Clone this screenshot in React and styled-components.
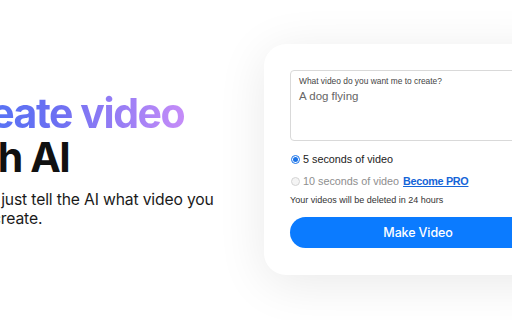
import styled, { createGlobalStyle } from 'styled-components';

const Global = createGlobalStyle`
  html, body {
    margin: 0;
    padding: 0;
    background: #fff;
    overflow: hidden;
  }
  body {
    font-family: Inter, "Noto Sans", sans-serif;
    color: #111;
  }
`;

const Page = styled.main`
  width: 512px;
  height: 320px;
  display: flex;
  align-items: flex-start;
  overflow: hidden;
`;

const Hero = styled.section`
  flex: 0 0 264px;
  padding-top: 91px;
`;

const Title = styled.h1`
  margin: 0;
  font-size: 41px;
  font-weight: 700;
  line-height: 44px;
  letter-spacing: -0.035em;
  white-space: nowrap;
`;

const Line = styled.span`
  display: block;
  margin-left: ${(p) => p.$shift}px;
  width: max-content;
  ${(p) =>
    p.$gradient &&
    `
    background: linear-gradient(90deg, #4a76f6 0%, #6a6ff2 45%, #c58cf8 100%);
    -webkit-background-clip: text;
    background-clip: text;
    color: transparent;
  `}
`;

const Lead = styled.p`
  margin: 11px 0 0;
  font-size: 15.7px;
  line-height: 19px;
  color: #1a1a1a;
  letter-spacing: -0.01em;
  white-space: nowrap;
`;

const Card = styled.div`
  flex: 0 0 308px;
  margin-top: 44px;
  background: #fff;
  border-radius: 22px;
  box-shadow: 0 8px 50px rgba(0, 0, 0, 0.09);
  padding: 26px 26px 27px;
  box-sizing: border-box;
  font-family: "Liberation Sans", Arial, sans-serif;
`;

const Prompt = styled.label`
  display: block;
  height: 71px;
  border: 1px solid #d9d9d9;
  border-radius: 4px;
  padding: 4px 8px;
  box-sizing: border-box;
`;

const PromptLabel = styled.span`
  display: block;
  font-size: 8.4px;
  color: #444;
  line-height: 12px;
`;

const PromptText = styled.span`
  display: block;
  margin-top: 3px;
  font-size: 11.5px;
  color: #666;
`;

const Options = styled.div`
  display: flex;
  flex-direction: column;
  gap: 9px;
  margin-top: 12px;
`;

const Option = styled.div`
  display: flex;
  align-items: center;
  gap: 3px;
  font-size: 10.8px;
  color: ${(p) => (p.$disabled ? '#8e8e8e' : '#222')};
  line-height: 13px;
`;

const Radio = styled.span`
  width: 9px;
  height: 9px;
  border-radius: 50%;
  margin-left: 1px;
  box-sizing: border-box;
  border: 1px solid ${(p) => (p.$checked ? '#1a73e8' : '#d4d4d4')};
  background: ${(p) => (p.$checked ? '#fff' : '#f4f4f4')};
  display: flex;
  align-items: center;
  justify-content: center;

  &::after {
    content: '';
    width: 5px;
    height: 5px;
    border-radius: 50%;
    background: ${(p) => (p.$checked ? '#1a73e8' : 'transparent')};
  }
`;

const ProLink = styled.a`
  color: #1565d8;
  font-weight: 700;
  letter-spacing: -0.3px;
  text-decoration: underline;
  margin-left: 1px;
`;

const Note = styled.p`
  margin: 7px 0 0;
  font-size: 9px;
  color: #333;
`;

const MakeButton = styled.button`
  display: block;
  width: 100%;
  height: 31px;
  margin-top: 12px;
  border: none;
  border-radius: 16px;
  background: #0b7bff;
  color: #fff;
  font-family: Inter, sans-serif;
  font-size: 12.5px;
  font-weight: 500;
  letter-spacing: -0.01em;
`;

export default function App() {
  return (
    <>
      <Global />
      <Page>
        <Hero>
          <Title>
            <Line $gradient $shift={-53}>Create video</Line>
            <Line $shift={-59}>with AI</Line>
          </Title>
          <Lead>
            <Line $shift={-52}>Simply just tell the AI what video you</Line>
            <Line $shift={-66}>want to create.</Line>
          </Lead>
        </Hero>
        <Card>
          <Prompt>
            <PromptLabel>What video do you want me to create?</PromptLabel>
            <PromptText>A dog flying</PromptText>
          </Prompt>
          <Options>
            <Option>
              <Radio $checked />5 seconds of video
            </Option>
            <Option $disabled>
              <Radio />10 seconds of video
              <ProLink href="#">Become PRO</ProLink>
            </Option>
          </Options>
          <Note>Your videos will be deleted in 24 hours</Note>
          <MakeButton>Make Video</MakeButton>
        </Card>
      </Page>
    </>
  );
}
